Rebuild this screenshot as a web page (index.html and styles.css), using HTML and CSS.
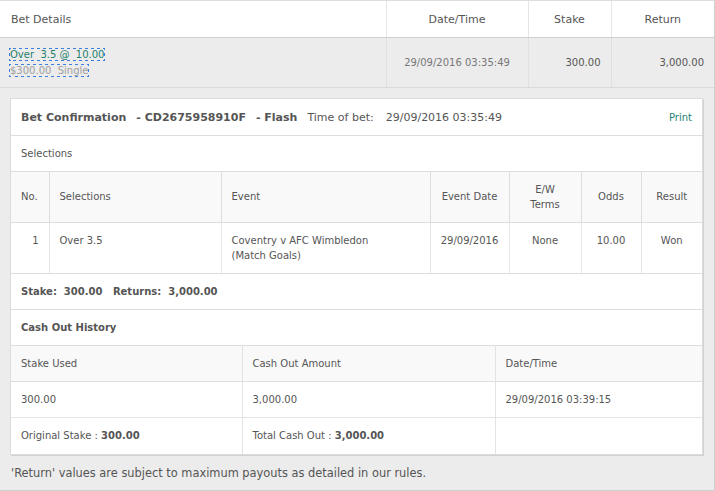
FILE: index.html
```html
<!DOCTYPE html>
<html lang="en">
<head>
<meta charset="utf-8">
<title>Bet Details</title>
<link rel="stylesheet" href="styles.css">
</head>
<body>
<div class="page">
  <table class="bets">
    <colgroup>
      <col class="c-details"><col class="c-date"><col class="c-stake"><col class="c-return">
    </colgroup>
    <thead>
      <tr>
        <th class="left">Bet Details</th>
        <th>Date/Time</th>
        <th>Stake</th>
        <th>Return</th>
      </tr>
    </thead>
    <tbody>
      <tr class="bet-row">
        <td class="left"><a class="bet-link" href="#"><span class="sel">Over&nbsp; 3.5 @&nbsp; 10.00</span><br><span class="sub">$300.00&nbsp; Single</span></a></td>
        <td class="center date">29/09/2016 03:35:49</td>
        <td class="right">300.00</td>
        <td class="right">3,000.00</td>
      </tr>
    </tbody>
  </table>

  <div class="detail">
    <div class="panel">
      <div class="conf-head">
        <div class="conf-title"><b>Bet Confirmation</b><b class="gap">- CD2675958910F</b><b class="gap">- Flash</b><span class="gap">Time of bet:</span><span class="gap wide">29/09/2016 03:35:49</span></div>
        <a class="print" href="#">Print</a>
      </div>
      <div class="line">Selections</div>
      <table class="sel-table">
        <colgroup>
          <col class="s-no"><col class="s-sel"><col class="s-event"><col class="s-date"><col class="s-ew"><col class="s-odds"><col class="s-result">
        </colgroup>
        <thead>
          <tr>
            <th>No.</th>
            <th>Selections</th>
            <th>Event</th>
            <th class="center">Event Date</th>
            <th class="center">E/W<br>Terms</th>
            <th class="center">Odds</th>
            <th class="center">Result</th>
          </tr>
        </thead>
        <tbody>
          <tr>
            <td class="right">1</td>
            <td>Over 3.5</td>
            <td>Coventry v AFC Wimbledon<br>(Match Goals)</td>
            <td class="center">29/09/2016</td>
            <td class="center">None</td>
            <td class="center">10.00</td>
            <td class="center">Won</td>
          </tr>
        </tbody>
      </table>
      <div class="line bold">Stake:&nbsp; 300.00&nbsp;&nbsp; Returns:&nbsp; 3,000.00</div>
      <div class="line bold">Cash Out History</div>
      <table class="co-table">
        <colgroup>
          <col class="co-a"><col class="co-b"><col class="co-c">
        </colgroup>
        <thead>
          <tr><th>Stake Used</th><th>Cash Out Amount</th><th>Date/Time</th></tr>
        </thead>
        <tbody>
          <tr><td>300.00</td><td>3,000.00</td><td>29/09/2016 03:39:15</td></tr>
          <tr><td>Original Stake : <b>300.00</b></td><td>Total Cash Out : <b>3,000.00</b></td><td></td></tr>
        </tbody>
      </table>
    </div>
  </div>

  <p class="note">'Return' values are subject to maximum payouts as detailed in our rules.</p>
</div>
</body>
</html>
```
FILE: styles.css
```css
* { box-sizing: border-box; }
html, body { margin: 0; padding: 0; }
body {
  background: #ececec;
  font-family: "DejaVu Sans", Verdana, sans-serif;
  color: #555;
  width: 715px;
  height: 491px;
  overflow: hidden;
}
.page {
  width: 715px;
  height: 491px;
  border-right: 1px solid #cfcfcf;
  border-bottom: 1px solid #cfcfcf;
  display: flex;
  flex-direction: column;
}
table { border-collapse: collapse; table-layout: fixed; }

/* top bets table */
.bets { width: 714px; }
.c-details { width: 386px; }
.c-date { width: 142px; }
.c-stake { width: 83px; }
.c-return { width: 103px; }
.bets th {
  background: #fff;
  font-weight: normal;
  font-size: 11px;
  height: 37px;
  padding: 0;
  border-top: 1px solid #dedede;
  border-bottom: 1px solid #cfcfcf;
  border-left: 1px solid #e6e6e6;
  text-align: center;
  color: #555;
}
.bets th.left { text-align: left; padding-left: 11px; border-left: none; }
.bets td {
  background: #ececec;
  font-size: 10px;
  height: 50px;
  padding: 0 10px;
  border-bottom: 1px solid #dadada;
  border-left: 1px solid #e0e0e0;
  vertical-align: middle;
}
.bets td.left { border-left: none; padding-left: 10px; line-height: 16px; }
.bets td.center { text-align: center; }
.bets td.right { text-align: right; }
.bets td.date { color: #777; }
.bet-link {
  text-decoration: none;
  outline: 1px dotted #3b7fe0;
  outline-offset: 0;
}
.bet-link .sel { color: #23806d; }
.bet-link .sub { color: #a0a0a0; }

/* detail area */
.detail { padding: 10px 11px 0 10px; }
.panel {
  background: #fff;
  border: 1px solid #dcdcdc;
  box-shadow: 1px 1px 0 #d2d2d2;
}
.conf-head {
  height: 37px;
  border-bottom: 1px solid #dedede;
  display: flex;
  align-items: center;
  justify-content: space-between;
  padding: 0 10px 0 10px;
  font-size: 11px;
}
.conf-title b { font-weight: bold; }
.conf-title .gap { margin-left: 10px; }
.conf-title .wide { margin-left: 12px; }
.print {
  font-size: 10px;
  color: #267f74;
  text-decoration: none;
}
.line {
  height: 36px;
  border-bottom: 1px solid #dedede;
  font-size: 10px;
  padding-left: 10px;
  display: flex;
  align-items: center;
}
.line.bold { font-weight: bold; }

/* selections table */
.sel-table, .co-table { width: 691px; font-size: 10px; }
.s-no { width: 38px; }
.s-sel { width: 172px; }
.s-event { width: 209px; }
.s-date { width: 79px; }
.s-ew { width: 72px; }
.s-odds { width: 60px; }
.s-result { width: 61px; }
.sel-table th {
  background: #f9f9f9;
  font-weight: normal;
  text-align: left;
  height: 50px;
  padding: 0 10px;
  line-height: 15px;
  border-bottom: 1px solid #dedede;
  border-left: 1px solid #dedede;
  vertical-align: middle;
}
.sel-table td {
  height: 51px;
  padding: 10px 10px 0 10px;
  line-height: 15px;
  border-bottom: 1px solid #dedede;
  border-left: 1px solid #e6e6e6;
  vertical-align: top;
}
.sel-table th:first-child, .sel-table td:first-child { border-left: none; }
.sel-table .center { text-align: center; padding-left: 4px; padding-right: 4px; }
.sel-table .right { text-align: right; }

/* cash out table */
.co-a { width: 231px; }
.co-b { width: 253px; }
.co-c { width: 207px; }
.co-table th, .co-table td {
  height: 36px;
  padding: 0 10px;
  text-align: left;
  font-weight: normal;
  border-bottom: 1px solid #e3e3e3;
  border-left: 1px solid #e3e3e3;
  vertical-align: middle;
}
.co-table th { background: #f9f9f9; border-bottom-color: #dedede; }
.co-table th:first-child, .co-table td:first-child { border-left: none; }
.co-table tr:last-child td { border-bottom: none; }
.co-table b { font-weight: bold; }

.note {
  margin: 0;
  padding-left: 11px;
  height: 37px;
  line-height: 36px;
  font-size: 11.4px;
  color: #555;
}
```
